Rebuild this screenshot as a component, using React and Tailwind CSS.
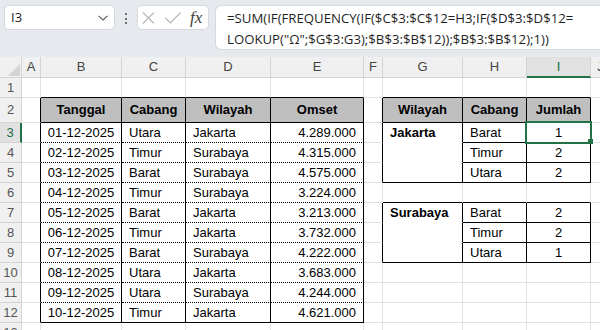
import React from 'react';

const COLS = ['A', 'B', 'C', 'D', 'E', 'F', 'G', 'H', 'I', 'J'];
const ROWS = [1, 2, 3, 4, 5, 6, 7, 8, 9, 10, 11, 12, 13];

const sales = [
    ['01-12-2025', 'Utara', 'Jakarta', '4.289.000'],
    ['02-12-2025', 'Timur', 'Surabaya', '4.315.000'],
    ['03-12-2025', 'Barat', 'Surabaya', '4.575.000'],
    ['04-12-2025', 'Timur', 'Surabaya', '3.224.000'],
    ['05-12-2025', 'Barat', 'Jakarta', '3.213.000'],
    ['06-12-2025', 'Timur', 'Jakarta', '3.732.000'],
    ['07-12-2025', 'Barat', 'Surabaya', '4.222.000'],
    ['08-12-2025', 'Utara', 'Jakarta', '3.683.000'],
    ['09-12-2025', 'Utara', 'Surabaya', '4.244.000'],
    ['10-12-2025', 'Timur', 'Jakarta', '4.621.000'],
];

// cell contents keyed like "B3"
const cells = {};
['Tanggal', 'Cabang', 'Wilayah', 'Omset'].forEach((t, i) => {
    cells[COLS[i + 1] + 2] = { text: t, align: 'c', bold: true, head: true };
});
['Wilayah', 'Cabang', 'Jumlah'].forEach((t, i) => {
    cells[COLS[i + 6] + 2] = { text: t, align: 'c', bold: true, head: true };
});
sales.forEach((row, i) => {
    const r = i + 3;
    cells['B' + r] = { text: row[0], align: 'c' };
    cells['C' + r] = { text: row[1], align: 'l' };
    cells['D' + r] = { text: row[2], align: 'l' };
    cells['E' + r] = { text: row[3], align: 'r' };
});
const summary = [
    ['Jakarta', [['Barat', 1], ['Timur', 2], ['Utara', 2]], 3],
    ['Surabaya', [['Barat', 2], ['Timur', 2], ['Utara', 1]], 7],
];
summary.forEach(([city, items, start]) => {
    cells['G' + start] = { text: city, align: 'l', bold: true };
    items.forEach(([branch, n], i) => {
        cells['H' + (start + i)] = { text: branch, align: 'l' };
        cells['I' + (start + i)] = { text: String(n), align: 'c' };
    });
});

const inT1 = (r, c) => r >= 2 && r <= 12 && c >= 1 && c <= 4;
const inT2 = (r, c) => c >= 6 && c <= 8 && ((r >= 2 && r <= 5) || (r >= 7 && r <= 9));
const inT = (r, c) => inT1(r, c) || inT2(r, c);

function borderClasses(r, c) {
    const right = inT(r, c) || inT(r, c + 1) ? 'border-r-black' : 'border-r-[#e1e1e1]';
    let bottom = 'border-b-[#e1e1e1]';
    if (inT1(r, c) && inT1(r + 1, c) && r >= 3) bottom = 'border-b-black [border-bottom-style:dotted]';
    else if (inT2(r, c) && inT2(r + 1, c) && c === 6 && r !== 2) bottom = 'border-b-white';
    else if (inT(r, c) || inT(r + 1, c)) bottom = 'border-b-black';
    return right + ' ' + bottom;
}

function Cell({ r, c }) {
    const key = COLS[c] + r;
    const data = cells[key];
    const selected = key === 'I3';
    const align = !data ? '' : data.align === 'c' ? 'justify-center' : data.align === 'r' ? 'justify-end pr-[7px]' : 'justify-start pl-[7px]';

    return (
        <div className={`relative flex items-center border-r border-b whitespace-nowrap ${borderClasses(r, c)} ${align} ${data?.head ? 'bg-[#bfbfbf]' : 'bg-white'} ${data?.bold ? 'font-bold' : ''}`}>
            {data?.text}
            {selected && (
                <>
                    <div className="absolute -left-[2px] -top-[2px] -right-[2px] -bottom-[2px] border-2 border-[#217346] z-10"></div>
                    <div className="absolute -right-[3px] -bottom-[2px] w-[5px] h-[5px] bg-[#217346] z-10"></div>
                </>
            )}
        </div>
    );
}

function TopBar() {
    return (
        <div className="h-[57px] bg-[#e6e9ee] flex items-start pt-[5px] pl-[4px] font-['Open_Sans',sans-serif] text-[#1f1f1f]">
            <div className="w-[111px] h-[25px] shrink-0 bg-white border border-[#d5d8dc] rounded-[5px] flex items-center justify-between pl-[6px] pr-[6px] text-[13px]">
                <span>I3</span>
                <svg width="10" height="6" viewBox="0 0 10 6" fill="none" stroke="#5a5a5a" strokeWidth="1.1">
                    <path d="M0.5 0.8 L5 5 L9.5 0.8" />
                </svg>
            </div>
            <div className="w-[22px] shrink-0 flex flex-col items-center gap-[2.5px] pt-[8px]">
                <span className="w-[2px] h-[2px] bg-[#444] rounded-full"></span>
                <span className="w-[2px] h-[2px] bg-[#444] rounded-full"></span>
                <span className="w-[2px] h-[2px] bg-[#444] rounded-full"></span>
            </div>
            <div className="w-[72px] h-[25px] shrink-0 bg-white border border-[#d5d8dc] rounded-[5px] flex items-center pl-[4px]">
                <svg width="13" height="12" viewBox="0 0 13 12" fill="none" stroke="#b5b5b5" strokeWidth="1.1">
                    <path d="M1 0.5 L12 11.5 M12 0.5 L1 11.5" />
                </svg>
                <svg className="ml-[10px]" width="16" height="12" viewBox="0 0 16 12" fill="none" stroke="#b5b5b5" strokeWidth="1.1">
                    <path d="M0.5 6 L5.5 11 L15.5 0.5" />
                </svg>
                <span className="ml-[9px] font-['Liberation_Serif',serif] italic text-[17px] leading-none text-[#3c3c3c]">fx</span>
            </div>
            <div className="ml-[6px] h-[45px] flex-1 min-w-0 bg-white border border-r-0 border-[#d5d8dc] rounded-l-[6px] pl-[11px] pt-[2px] text-[13.2px] leading-[20.5px] whitespace-nowrap overflow-hidden">
                <div>=SUM(IF(FREQUENCY(IF($C$3:$C$12=H3;IF($D$3:$D$12=</div>
                <div>LOOKUP("Ω";$G$3:G3);$B$3:$B$12));$B$3:$B$12);1))</div>
            </div>
        </div>
    );
}

function Sheet() {
    return (
        <div className="grid grid-cols-[22px_19px_81px_64px_85px_93px_19px_80px_64px_64px_20px] grid-rows-[21px_20px_25px_repeat(11,20px)] w-max font-['Liberation_Sans',Arial,sans-serif] text-[13px] text-black">
            <div className="relative bg-[#f0f0f0] border-r border-b border-[#d4d4d4]">
                <svg className="absolute right-[1px] bottom-[1px]" width="12" height="12" viewBox="0 0 12 12">
                    <polygon points="12,0 12,12 0,12" fill="#d2d2d2" />
                </svg>
            </div>
            {COLS.map((col) => (
                <div
                    key={col}
                    className={`flex items-center justify-center border-r border-[#d4d4d4] ${col === 'I' ? 'bg-[#e1e1e1] text-[#1d6b42] border-b-2 border-b-[#217346]' : 'bg-[#f0f0f0] text-[#444] border-b'}`}
                >
                    {col}
                </div>
            ))}
            {ROWS.map((r) => (
                <React.Fragment key={r}>
                    <div className={`flex items-center justify-center border-b border-[#d4d4d4] ${r === 3 ? 'bg-[#e1e1e1] text-[#1d6b42] border-r-2 border-r-[#217346]' : 'bg-[#f0f0f0] text-[#555] border-r'}`}>
                        {r}
                    </div>
                    {COLS.map((col, c) => (
                        <Cell key={col} r={r} c={c} />
                    ))}
                </React.Fragment>
            ))}
        </div>
    );
}

export default function App() {
    return (
        <div className="w-[600px] h-[330px] overflow-hidden bg-white">
            <TopBar />
            <Sheet />
        </div>
    );
}
